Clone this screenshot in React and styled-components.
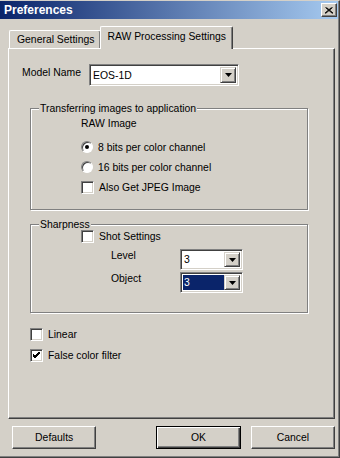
import React from 'react';
import styled, { createGlobalStyle } from 'styled-components';

const GlobalStyle = createGlobalStyle`
  html, body {
    margin: 0;
    padding: 0;
    background: #d4d0c8;
  }
  * {
    box-sizing: border-box;
  }
`;

const Window = styled.div`
  width: 340px;
  height: 458px;
  display: flex;
  flex-direction: column;
  background: #d4d0c8;
  border-top: 1px solid #d4d0c8;
  border-right: 1px solid #404040;
  border-bottom: 1px solid #404040;
  box-shadow: inset -1px -1px 0 #808080;
  font-family: 'Liberation Sans', Arial, sans-serif;
  font-size: 10.4px;
  color: #000;
  overflow: hidden;
`;

const TitleBar = styled.div`
  height: 18px;
  margin-right: 1px;
  display: flex;
  align-items: center;
  justify-content: space-between;
  padding: 0 1px 0 4px;
  background: linear-gradient(to right, #0a246a, #a6caf0);
`;

const Title = styled.div`
  color: #fff;
  font-weight: bold;
  font-size: 12px;
`;

const CloseButton = styled.div`
  width: 16px;
  height: 14px;
  display: flex;
  align-items: center;
  justify-content: center;
  background: #d4d0c8;
  border: 1px solid;
  border-color: #fff #404040 #404040 #fff;
  box-shadow: inset -1px -1px 0 #808080;
`;

const Body = styled.div`
  flex: 1;
  display: flex;
  flex-direction: column;
  padding: 7px 4px 0 8px;
`;

const TabStrip = styled.div`
  height: 22px;
  display: flex;
  align-items: flex-end;
  padding-left: 1px;
`;

const Tab = styled.div`
  position: relative;
  height: ${p => (p.$active ? 23 : 18)}px;
  margin: ${p => (p.$active ? '0 -1px -1px -1px' : '0')};
  z-index: ${p => (p.$active ? 1 : 0)};
  padding: ${p => (p.$active ? '3px 6px 0 6px' : '2px 6px 0 7px')};
  background: #d4d0c8;
  border-top: 1px solid #fff;
  border-left: 1px solid #fff;
  border-right: 1px solid #404040;
  border-radius: 2px 2px 0 0;
  box-shadow: inset -1px 0 0 #808080;
  white-space: nowrap;
  line-height: 13px;
`;

const Panel = styled.div`
  height: 371px;
  display: flex;
  flex-direction: column;
  border-top: 1px solid #fff;
  border-left: 1px solid #fff;
  border-right: 1px solid #404040;
  border-bottom: 1px solid #404040;
  box-shadow: inset -1px -1px 0 #808080;
  padding: 15px 0 0 13px;
`;

const ModelRow = styled.div`
  display: flex;
  align-items: flex-start;
`;

const Label = styled.div`
  width: ${p => p.$w || 'auto'};
  padding-top: ${p => p.$pt || 0}px;
  line-height: 13px;
  white-space: nowrap;
`;

const ComboBox = styled.div`
  display: flex;
  width: ${p => p.$w}px;
  height: ${p => p.$h}px;
  background: #fff;
  border: 1px solid;
  border-color: #808080 #fff #fff #808080;
  box-shadow: inset 1px 1px 0 #404040, inset -1px -1px 0 #d4d0c8;
  padding: 2px;
`;

const ComboText = styled.div`
  flex: 1;
  display: flex;
  align-items: center;
  padding-left: 1px;
  line-height: 13px;
  background: ${p => (p.$selected ? '#0a246a' : 'transparent')};
  color: ${p => (p.$selected ? '#fff' : '#000')};
`;

const DropButton = styled.div`
  width: 16px;
  display: flex;
  align-items: center;
  justify-content: center;
  background: #d4d0c8;
  border: 1px solid;
  border-color: #d4d0c8 #404040 #404040 #d4d0c8;
  box-shadow: inset 1px 1px 0 #fff, inset -1px -1px 0 #808080;
`;

const Group = styled.fieldset`
  margin: ${p => p.$mt}px 0 0 8px;
  width: 278px;
  padding: 0 0 ${p => p.$pb}px 0;
  border: 1px solid #808080;
  box-shadow: inset 1px 1px 0 #fff, 1px 1px 0 #fff;
  min-width: 0;
`;

const Legend = styled.legend`
  margin-left: 8px;
  padding: 0 1px;
  line-height: 13px;
  background: #d4d0c8;
`;

const GroupBody = styled.div`
  display: flex;
  flex-direction: column;
  padding-left: ${p => p.$pl}px;
`;

const SubHeading = styled.div`
  line-height: 13px;
  margin: 2px 0 7px;
`;

const OptionRow = styled.label`
  display: flex;
  align-items: center;
  gap: 5px;
  height: ${p => p.$h || 20}px;
  margin-top: ${p => p.$mt || 0}px;
  margin-left: ${p => p.$ml || 0}px;
  white-space: nowrap;
`;

const Radio = styled.span`
  width: 12px;
  height: 12px;
  border-radius: 50%;
  display: flex;
  align-items: center;
  justify-content: center;
  background: #fff;
  border: 1px solid;
  border-color: #808080 #fff #fff #808080;
  box-shadow: inset 1px 1px 0 #404040;

  &::after {
    content: '';
    width: 4px;
    height: 4px;
    border-radius: 50%;
    background: ${p => (p.$on ? '#000' : 'transparent')};
  }
`;

const CheckBox = styled.span`
  width: 13px;
  height: 13px;
  display: flex;
  align-items: center;
  justify-content: center;
  background: #fff;
  border: 1px solid;
  border-color: #808080 #fff #fff #808080;
  box-shadow: inset 1px 1px 0 #404040, inset -1px -1px 0 #d4d0c8;
`;

const SettingRow = styled.div`
  display: flex;
  align-items: flex-start;
  margin-top: ${p => p.$mt}px;
  padding-left: 30px;
`;

const ButtonRow = styled.div`
  display: flex;
  margin-top: 7px;
  padding-left: 4px;
`;

const Button = styled.div`
  width: 85px;
  height: 23px;
  display: flex;
  align-items: center;
  justify-content: center;
  margin-left: ${p => p.$ml || 0};
  background: #d4d0c8;
  border: 1px solid;
  border-color: ${p => (p.$default ? '#000' : '#fff #404040 #404040 #fff')};
  box-shadow: ${p =>
    p.$default
      ? 'inset 1px 1px 0 #fff, inset -1px -1px 0 #404040, inset -2px -2px 0 #808080'
      : 'inset -1px -1px 0 #808080'};
`;

const Arrow = () => (
  <svg width="7" height="4" viewBox="0 0 7 4">
    <path d="M0 0h7L3.5 4z" fill="#000" />
  </svg>
);

const Combo = ({ w, h, value, selected }) => (
  <ComboBox $w={w} $h={h}>
    <ComboText $selected={selected}>{value}</ComboText>
    <DropButton>
      <Arrow />
    </DropButton>
  </ComboBox>
);

const Check = ({ on }) => (
  <CheckBox>
    {on && (
      <svg width="7" height="7" viewBox="0 0 7 7">
        <path d="M0 3l2 2 5-5M0 4l2 2 5-5M0 2l2 2 5-5" stroke="#000" strokeWidth="1" fill="none" />
      </svg>
    )}
  </CheckBox>
);

export default function App() {
  return (
    <>
      <GlobalStyle />
      <Window>
        <TitleBar>
          <Title>Preferences</Title>
          <CloseButton>
            <svg width="8" height="7" viewBox="0 0 8 7">
              <path d="M0.5 0.5l7 6M7.5 0.5l-7 6M1.5 0.5l7 6M6.5 0.5l-7 6" stroke="#000" strokeWidth="1" />
            </svg>
          </CloseButton>
        </TitleBar>
        <Body>
          <TabStrip>
            <Tab>General Settings</Tab>
            <Tab $active>RAW Processing Settings</Tab>
          </TabStrip>
          <Panel>
            <ModelRow>
              <Label $w="67px" $pt={2}>Model Name</Label>
              <Combo w={150} h={22} value="EOS-1D" />
            </ModelRow>

            <Group $mt={16} $pb={12}>
              <Legend>Transferring images to application</Legend>
              <GroupBody $pl={50}>
                <SubHeading>RAW Image</SubHeading>
                <OptionRow>
                  <Radio $on />
                  8 bits per color channel
                </OptionRow>
                <OptionRow>
                  <Radio />
                  16 bits per color channel
                </OptionRow>
                <OptionRow>
                  <Check />
                  Also Get JPEG Image
                </OptionRow>
              </GroupBody>
            </Group>

            <Group $mt={8} $pb={19}>
              <Legend>Sharpness</Legend>
              <GroupBody $pl={50}>
                <OptionRow $h={13} $mt={-1}>
                  <Check />
                  Shot Settings
                </OptionRow>
                <SettingRow $mt={6}>
                  <Label $w="69px">Level</Label>
                  <Combo w={63} h={21} value="3" />
                </SettingRow>
                <SettingRow $mt={2}>
                  <Label $w="69px">Object</Label>
                  <Combo w={63} h={21} value="3" selected />
                </SettingRow>
              </GroupBody>
            </Group>

            <OptionRow $h={13} $mt={15} $ml={8}>
              <Check />
              Linear
            </OptionRow>
            <OptionRow $h={13} $mt={8} $ml={8}>
              <Check on />
              False color filter
            </OptionRow>
          </Panel>
          <ButtonRow>
            <Button>Defaults</Button>
            <Button $default $ml="60px">OK</Button>
            <Button $ml="10px">Cancel</Button>
          </ButtonRow>
        </Body>
      </Window>
    </>
  );
}
